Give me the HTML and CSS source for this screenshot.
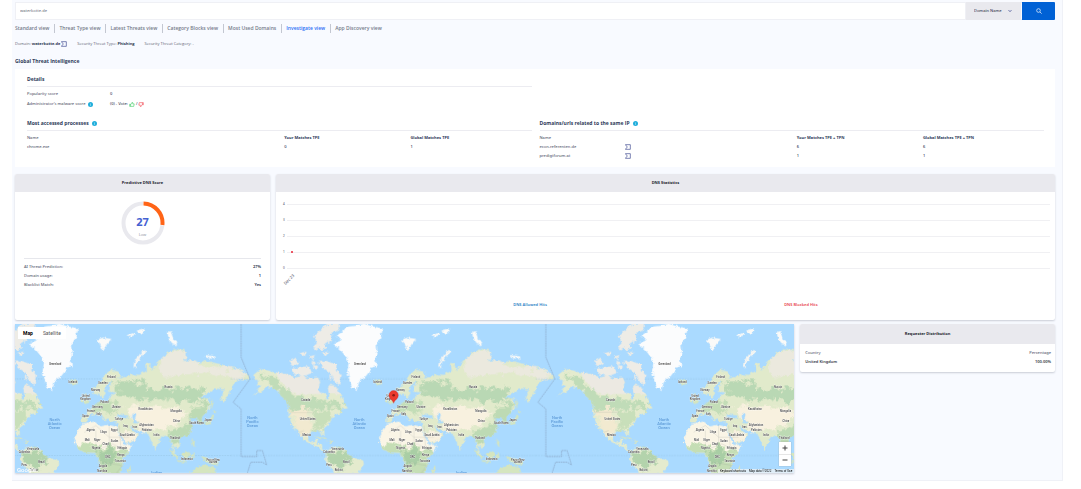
FILE: index.html
```html
<!DOCTYPE html>
<html lang="en">
<head>
<meta charset="utf-8">
<title>Investigate view</title>
<link rel="stylesheet" href="styles.css">
</head>
<body>
<svg class="defs" aria-hidden="true">
  <defs>
    <symbol id="sigma" viewBox="0 0 18 18"><path d="M9 2H1l6 7-6 7h15V2H9" fill="none" stroke="#3c4890" stroke-width="2"/></symbol>
    <symbol id="info" viewBox="0 0 16 16"><circle cx="8" cy="8" r="8" fill="#21aedb"/><path d="M8 7v5M8 4v1.500" stroke="#c9f0fb" stroke-width="2"/></symbol>
    <symbol id="thumb" viewBox="0 0 18 16"><path d="M1.500 7h3v7h-3zM4.500 7.500 8 5l1-4c3 0 3 3 2 5h5l-1.500 8H4.500" fill="none" stroke="currentColor" stroke-width="1.800" stroke-linejoin="round"/></symbol>
  </defs>
</svg>
<main class="page">
  <form class="search">
    <input class="search-box" type="text" value="waterkotte.de" aria-label="Search">
    <div class="select-wrap">
      <select class="search-type" aria-label="Search type"><option>Domain Name</option></select>
      <svg class="chevron" viewBox="0 0 10 8"><path d="M1.500 2 5 5.500 8.500 2" fill="none" stroke="#34408c" stroke-width="2"/></svg>
    </div>
    <button class="search-button" type="button" aria-label="Search"><svg class="search-icon" viewBox="0 0 18 18"><circle cx="7.500" cy="7.500" r="5.500" fill="none" stroke="#fff" stroke-width="2"/><path d="m12 12 5 5" stroke="#fff" stroke-width="2"/></svg></button>
  </form>
  <nav class="tabs">
    <a href="#">Standard view</a><a href="#">Threat Type view</a><a href="#">Latest Threats view</a><a href="#">Category Blocks view</a><a href="#">Most Used Domains</a><a class="active" href="#">Investigate view</a><a href="#">App Discovery view</a>
  </nav>
  <div class="facts">
    <span class="fact">Domain: <b>waterkotte.de</b><svg class="sigma"><use href="#sigma"/></svg></span>
    <span class="fact">Security Threat Type: <b>Phishing</b></span>
    <span class="fact">Security Threat Category: -</span>
  </div>
  <h1 class="title">Global Threat Intelligence</h1>

  <section class="panel">
    <div class="block details">
      <h2 class="block-title">Details</h2>
      <dl class="detail-list">
        <dt>Popularity score</dt><dd>0</dd>
        <dt>Administrator's malware score <svg class="info"><use href="#info"/></svg></dt>
        <dd>(0) - Vote: <button class="vote up" type="button" aria-label="Vote up"><svg><use href="#thumb"/></svg></button>/<button class="vote down" type="button" aria-label="Vote down"><svg><use href="#thumb"/></svg></button></dd>
      </dl>
    </div>
    <div class="block">
      <h2 class="block-title">Most accessed processes <svg class="info"><use href="#info"/></svg></h2>
      <table class="matches">
        <thead><tr><th>Name</th><th></th><th>Your Matches TPE</th><th>Global Matches TPE</th></tr></thead>
        <tbody><tr><td>chrome.exe</td><td></td><td>0</td><td>1</td></tr></tbody>
      </table>
    </div>
    <div class="block">
      <h2 class="block-title">Domains/urls related to the same IP <svg class="info"><use href="#info"/></svg></h2>
      <table class="matches">
        <thead><tr><th>Name</th><th></th><th>Your Matches TPE + TPN</th><th>Global Matches TPE + TPN</th></tr></thead>
        <tbody>
          <tr><td>econ-referenten.de</td><td><svg class="sigma"><use href="#sigma"/></svg></td><td>6</td><td>6</td></tr>
          <tr><td>predigtforum.at</td><td><svg class="sigma"><use href="#sigma"/></svg></td><td>1</td><td>1</td></tr>
        </tbody>
      </table>
    </div>
  </section>

  <div class="row row-score">
    <section class="card">
      <h2 class="card-title">Predictive DNS Score</h2>
      <div class="gauge">
        <svg class="ring" viewBox="0 0 44 44"><circle cx="22" cy="22" r="19.500" fill="none" stroke="#e9e9ee" stroke-width="4"/><path d="M22 2.500A19.500 19.500 0 0 1 41.400 24.400" fill="none" stroke="#fff" stroke-width="5"/><path d="M22.500 2.500A19.500 19.500 0 0 1 41.400 24" fill="none" stroke="#ff6417" stroke-width="4"/></svg>
        <div class="gauge-text"><span class="gauge-value">27</span><span class="gauge-level">Low</span></div>
      </div>
      <dl class="score-list">
        <div><dt>AI Threat Prediction:</dt><dd>27%</dd></div>
        <div><dt>Domain usage:</dt><dd>1</dd></div>
        <div><dt>Blacklist Match:</dt><dd>Yes</dd></div>
      </dl>
    </section>
    <section class="card">
      <h2 class="card-title">DNS Statistics</h2>
      <div class="chart">
        <div class="tick">4</div>
        <div class="tick">3</div>
        <div class="tick">2</div>
        <div class="tick">1<span class="dot"></span></div>
        <div class="tick">0</div>
        <div class="date">Dec 23</div>
      </div>
      <div class="legend"><span class="allowed">DNS Allowed Hits</span><span class="blocked">DNS Blocked Hits</span></div>
    </section>
  </div>

  <div class="row row-map">
    <section class="map" aria-label="Map of requesters">
      <svg class="map-canvas" viewBox="0 0 2340 447" preserveAspectRatio="xMidYMid slice">
        <defs>
          <filter id="coast" x="-5%" y="-5%" width="110%" height="110%"><feTurbulence type="fractalNoise" baseFrequency="0.09" numOctaves="3" seed="4" result="n"/><feDisplacementMap in="SourceGraphic" in2="n" scale="13" xChannelSelector="R" yChannelSelector="G"/></filter>
          <filter id="soft" x="-20%" y="-20%" width="140%" height="140%"><feTurbulence type="fractalNoise" baseFrequency="0.05" numOctaves="4" seed="9" result="n"/><feDisplacementMap in="SourceGraphic" in2="n" scale="45" xChannelSelector="R" yChannelSelector="G"/><feGaussianBlur stdDeviation="2"/></filter>
          <path id="america" d="M68 178 90 160 110 164 130 170 150 172 175 178 195 186 215 180 235 190 262 186 268 200 262 220 272 232 286 238 290 252 296 240 292 215 300 205 318 215 326 232 334 245 346 270 352 278 330 282 340 290 318 296 305 306 296 325 280 338 282 358 276 358 270 346 250 348 234 354 232 370 240 380 250 380 254 372 262 370 258 384 274 388 274 398 284 404 292 404 280 408 262 394 238 384 216 372 205 350 192 332 196 348 204 362 190 340 178 312 173 290 175 272 168 256 150 240 140 226 122 216 105 214 96 226 78 236 62 244 84 228 80 220 92 212 78 206 84 196 72 190zM290 406 304 394 324 396 342 402 352 416 366 424 398 436 400 446 388 462 384 476 316 476 304 460 290 446 283 430z"/>
          <path id="eurasia" d="M274 224 296 202 312 176 330 162 352 168 362 180 350 190 376 184 396 176 416 178 438 166 436 142 446 142 452 166 462 150 486 124 520 98 554 104 558 122 546 136 580 134 600 142 612 134 650 144 690 152 722 164 748 184 744 196 722 190 704 200 698 206 686 230 668 262 660 252 672 222 640 218 622 234 596 244 624 250 628 278 610 296 602 306 604 324 594 326 588 308 566 308 576 332 568 354 544 366 534 370 538 392 528 400 518 388 520 404 530 424 518 412 510 378 496 356 484 364 470 384 462 404 452 380 444 356 416 348 392 336 386 330 394 346 414 356 404 372 378 386 370 376 352 344 348 320 328 318 322 308 310 314 302 300 288 286 298 304 286 296 274 296 262 302 256 320 242 320 242 300 260 298 256 284 274 276 286 264 300 258 324 258 330 240 344 230 322 228 324 214 334 198 322 202 312 220 314 234 304 248 294 234 280 236z"/>
          <path id="africa" d="M246 324 280 318 300 332 322 328 348 334 356 358 370 388 394 388 388 404 366 430 364 450 356 476 300 476 296 440 284 412 250 410 232 400 220 382 226 354z"/>
          <clipPath id="america-clip"><use href="#america"/></clipPath>
          <clipPath id="eurasia-clip"><use href="#eurasia"/></clipPath>
          <clipPath id="africa-clip"><use href="#africa"/></clipPath>
          <g id="world">
            <path d="M0 420H915M0 190H915" stroke="#8db8d4" stroke-width="1" stroke-dasharray="5 3"/>
            <path d="M31 25V125L58 190 7 260 31 280V423H78V405H95L108 448 95 440H60L50 472" fill="none" stroke="#869ebd" stroke-width="2" stroke-dasharray="5 2"/>
            <g filter="url(#coast)">
              <use href="#america" fill="#e4ebce"/>
              <g clip-path="url(#america-clip)">
                <path d="M130 160H350V236H190L150 200z" fill="#ece9e2"/>
                <g filter="url(#soft)"><path d="M90 185 140 190 180 235 240 250 340 265 340 280 260 280 180 290 150 240z" fill="#c0dcb8"/><path d="M175 290 230 280 245 350 220 370z" fill="#f2ead0"/><path d="M250 285 310 285 280 340 252 345z" fill="#c8dfba"/><path d="M285 415 350 400 370 440 330 460 290 440z" fill="#b3d3ac"/></g>
              </g>
              <path d="M175 138 192 126 206 140 190 152zM180 160 200 156 232 152 244 172 220 182 190 176zM205 112 228 108 222 122zM238 122 252 118 248 134zM245 95 260 82 272 90 256 102zM238 134 258 140 250 148zM250 60 286 28 330 25 322 44 300 54 304 72 282 88 288 98 272 104 262 92zM268 112 296 108 290 120zM262 140 284 134 318 148 316 162 330 178 326 208 314 200 300 172 282 160zM244 148 262 150 258 164zM296 178 306 186 298 194z" fill="#eeece6"/>
              <path d="M308 84 332 74 318 60 338 46 346 34 376 30 400 24 426 32 458 38 450 54 454 60 438 84 440 108 434 130 438 150 424 158 404 184 386 198 378 224 366 218 356 194 350 166 354 140 346 124 332 106 322 96z" fill="#fbfcfd"/>
              <path d="M250 362 282 366 292 374 270 370zM296 376 312 380 298 384z" fill="#d7e5c3"/>
              <g transform="translate(225)">
                <use href="#eurasia" fill="#e1eacb"/>
                <g clip-path="url(#eurasia-clip)">
                  <g filter="url(#soft)"><path d="M340 196 430 200 440 225 600 215 620 245 600 260 430 250 350 240z" fill="#b9d8b4"/><path d="M270 262 340 250 340 290 280 292z" fill="#c3ddb7"/><path d="M500 350 560 330 580 270 620 260 610 320 560 370 510 400z" fill="#bddab4"/><path d="M370 270 520 275 560 290 530 325 470 345 340 350 390 390 420 340z" fill="#f8f1df"/><path d="M500 110 560 110 600 150 720 160 740 190 560 170 500 190 470 160z" fill="#ebe9de"/></g>
                </g>
                <use href="#africa" fill="#faf5e6"/>
                <g clip-path="url(#africa-clip)"><g filter="url(#soft)"><path d="M215 388 300 392 380 400 380 490 280 490 270 430z" fill="#c5deb5"/><path d="M294 405 350 402 345 440 300 445z" fill="#a9cea5"/></g></g>
                <path d="M345 306 352 296 382 300 378 308zM396 290 406 296 402 310 412 324 400 322 394 304z" fill="#aadaff"/>
                <path d="M206 196 228 194 232 204 214 210zM250 236 260 238 258 250 268 260 250 266 252 250zM240 250 248 250 246 260 238 260zM632 252 638 262 634 280 630 272zM636 286 648 284 640 292zM634 296 640 304 632 322 612 326 610 320 626 314zM504 402 516 408 532 426 530 432 516 420zM544 414 560 404 566 416 560 432 546 428zM532 434 558 438 556 442 532 438zM570 416 582 414 576 432 572 430zM574 370 582 380 580 396 574 384zM600 422 620 426 646 436 656 448 634 444 616 440zM564 476 582 460 604 448 626 450 630 460 636 448 646 476zM376 470 388 452 390 462 384 476z" fill="#d5e5bf"/>
                <path d="M290 72 306 66 332 70 322 80 306 104 296 84zM380 60 396 52 402 58 384 64zM408 44 430 38 428 52 412 54zM498 50 510 46 518 72 530 80 526 92 508 80zM612 118 640 122 642 130 616 126z" fill="#fafaf8"/>
                <path d="M402 156Q400 132 434 106" fill="none" stroke="#f5f5f2" stroke-width="8"/>
              </g>
            </g>
            <g fill="none" stroke="#8d9190" stroke-width="1" opacity=".5"><path d="M475 350 510 330 550 365 610 365M510 390V345M550 325V390M580 330 585 400M520 400 560 385 600 405M530 440 590 450 570 475M176 290H250M206 350 220 345"/></g>
          </g>
        </defs>
        <rect width="2340" height="447" fill="#aadaff"/>
        <use href="#world" x="-267" y="-25"/>
        <use href="#world" x="648" y="-25"/>
        <use href="#world" x="1563" y="-25"/>
        <g id="labels"></g>
        <path d="M1137 238c-2-10-14-12-14-24a14 14 0 0 1 28 0c0 12-12 14-14 24z" fill="#ea3a2f" stroke="#c3261d" stroke-width="1"/>
        <circle cx="1137" cy="214" r="4" fill="#8d1a13"/>
      </svg>
      <div class="map-type"><button class="on" type="button">Map</button><button type="button">Satellite</button></div>
      <div class="google">Google</div>
      <div class="zoom"><button type="button" aria-label="Zoom in"><svg viewBox="0 0 12 12"><path d="M6 1v10M1 6h10" stroke="#444" stroke-width="2"/></svg></button><button type="button" aria-label="Zoom out"><svg viewBox="0 0 12 12"><path d="M1 6h10" stroke="#444" stroke-width="2"/></svg></button></div>
      <div class="credits"><button type="button">Keyboard shortcuts</button><span>Map data ©2022</span><a href="#">Terms of Use</a></div>
    </section>
    <section class="card requester">
      <h2 class="card-title">Requester Distribution</h2>
      <table class="countries">
        <thead><tr><th>Country</th><th>Percentage</th></tr></thead>
        <tbody><tr><td>United Kingdom</td><td>100.00%</td></tr></tbody>
      </table>
    </section>
  </div>
</main>
<script src="map.js"></script>
</body>
</html>
```
FILE: styles.css
```css
* { box-sizing: border-box; }
body { margin: 0; background: #fff; font: 500 4px/8px "Noto Sans", "Open Sans", sans-serif; color: #5d6373; }
h1, h2, dl, dd { margin: 0; }
button, input, select { font: inherit; color: inherit; border: 0; border-radius: 0; padding: 0; margin: 0; background: none; }
svg { display: block; }
.defs { position: absolute; width: 0; height: 0; }
.page { margin: 0 18px 0 12px; padding: 2px 7px 7px 3px; background: #f8faff; border: 1px solid #eff1f7; border-top: 0; border-left: 0; }

.search { display: flex; height: 18px; }
.search-box { flex: 1; min-width: 0; background: #fff; border: 1px solid #eff0f5; padding: 0 4px; color: #777c88; }
.select-wrap { position: relative; width: 55px; background: #e9e9ee; }
.search-type { width: 100%; height: 100%; appearance: none; padding: 0 8px; color: #3b4256; }
.chevron { position: absolute; right: 9px; top: 7px; width: 4px; height: 4px; pointer-events: none; }
.search-button { width: 34px; background: #0061d5; border-left: 1px solid #f8faff; border-radius: 1px; display: grid; place-items: center; }
.search-icon { width: 6px; height: 6px; }

.tabs { display: flex; margin-top: 4px; font-family: "Open Sans", sans-serif; font-size: 5px; line-height: 9px; font-weight: 600; }
.tabs a { color: #757b8a; text-decoration: none; padding-right: 5px; margin-right: 4px; border-right: 1px solid #c3c7d1; }
.tabs a:last-child { border: 0; }
.tabs .active { color: #2a70f5; }

.facts { display: flex; gap: 10px; margin-top: 7px; font-family: "Open Sans", sans-serif; }
.fact { display: flex; align-items: center; gap: 1px; white-space: nowrap; }
.fact b { color: #2f3852; }
.sigma { width: 6px; height: 6px; }
.title { margin-top: 9px; font: 700 5px/9px "Open Sans", sans-serif; color: #2e3a59; }

.panel { display: grid; grid-template-columns: 1fr 1fr; column-gap: 8px; margin-top: 3px; padding: 6px 11px 7px 12px; background: #fff; }
.details { padding-bottom: 10px; grid-row: 1; }
.details + .block { grid-column: 1; }
.block-title { display: flex; align-items: center; gap: 3px; height: 12px; padding-bottom: 3px; border-bottom: 1px solid #ececf1; font-family: "Open Sans", sans-serif; font-size: 5px; color: #2e3a59; }
.info { width: 5px; height: 5px; }
.detail-list { display: grid; grid-template-columns: 83px 1fr; padding-top: 2px; line-height: 10px; }
.detail-list dt, .detail-list dd { display: flex; align-items: center; gap: 3px; }
.detail-list dd { gap: 1px; color: #3d4459; }
.vote svg { width: 6px; height: 5px; }
.up { color: #31c75a; }
.down { color: #f1404b; transform: rotate(180deg); }
.matches { width: 100%; table-layout: fixed; border-collapse: collapse; margin-top: 2px; line-height: 9px; }
.matches th, .matches td { padding: 0; height: 9px; text-align: left; font-weight: 500; }
.matches th:nth-child(1) { width: 17%; }
.matches th:nth-child(2) { width: 34%; }
.matches th:nth-child(3) { width: 25%; }
.matches th:nth-child(4) { width: 24%; }
.matches th:nth-child(n+3) { font-weight: 700; color: #2e3a59; }
.matches td:nth-child(n+3) { color: #2e3a59; }

.row { display: grid; gap: 6px; align-items: start; }
.row-score { grid-template-columns: 255fr 779fr; margin-top: 7px; align-items: stretch; }
.row-map { grid-template-columns: 780fr 255fr; margin-top: 4px; }
.card { background: #fff; border-radius: 2px; box-shadow: 0 1px 2px #c9ccd6; overflow: hidden; }
.card-title { height: 18px; line-height: 18px; font-size: 4px; text-align: center; background: #e9e9ee; color: #23262f; }
.requester .card-title { height: 20px; line-height: 20px; }
.gauge { position: relative; width: 44px; margin: 9px auto 13px; }
.ring { width: 44px; height: 44px; }
.gauge-text { position: absolute; inset: 0; padding-top: 15px; display: flex; flex-direction: column; align-items: center; }
.gauge-value { font-size: 11px; line-height: 12px; font-weight: 700; color: #4562d2; }
.gauge-level { margin-top: 3px; color: #a5a8b2; }
.score-list { margin: 0 9px; padding: 3px 0 31px; border-top: 1px solid #e6e7ec; line-height: 9px; }
.score-list div { display: flex; justify-content: space-between; }
.score-list dd { color: #20283f; font-weight: 600; }

.chart { padding: 4px 5px 0 7px; font-size: 3px; }
.tick { position: relative; display: flex; align-items: center; gap: 2px; height: 16px; }
.tick::after { content: ""; flex: 1; border-top: 1px solid #f0f0f3; }
.dot { position: absolute; left: 8px; top: 7px; width: 2px; height: 2px; border-radius: 1px; background: #e82234; }
.date { width: 12px; font-size: 4px; white-space: nowrap; transform: rotate(-45deg); }
.legend { display: flex; justify-content: space-evenly; margin-top: 17px; font-weight: 600; }
.allowed { color: #2a7fc6; }
.blocked { color: #e8434c; }

.map { position: relative; overflow: hidden; box-shadow: 0 1px 2px #c9ccd6; }
.map-canvas { width: 100%; }
.map-canvas text { font: 500 8px Roboto, sans-serif; fill: #444; text-anchor: middle; stroke: #fff; stroke-width: 1px; paint-order: stroke; }
.map-canvas .sea { font-size: 12px; fill: #5e9bd8; stroke: none; }
.map-type { position: absolute; left: 3px; top: 3px; display: flex; background: #fff; font: 5px/12px Roboto, sans-serif; color: #555; }
.map-type button { height: 12px; padding: 0 5px; }
.map-type .on { font-weight: 700; color: #000; }
.google { position: absolute; left: 2px; bottom: 0; font: 500 6px/7px Roboto, sans-serif; color: #fff; }
.zoom { position: absolute; right: 3px; bottom: 7px; width: 12px; background: #fff; display: grid; box-shadow: 0 0 1px #999; }
.zoom button { height: 12px; display: grid; place-items: center; }
.zoom button + button { border-top: 1px solid #e6e6e6; }
.zoom svg { width: 6px; height: 6px; }
.credits { position: absolute; right: 0; bottom: 0; display: flex; gap: 3px; padding: 0 2px; background: #f5f5f5b0; font: 3px/4px Roboto, sans-serif; color: #000; }
.credits a { color: inherit; text-decoration: none; }

.countries { width: 100%; border-collapse: collapse; margin: 4px 0 6px; }
.countries th, .countries td { padding: 0 4px 0 5px; height: 9px; text-align: left; font-weight: 500; }
.countries td { font-weight: 600; color: #30343e; }
.countries th:last-child, .countries td:last-child { text-align: right; }
```
FILE: map.js
```js
const places = [
  ["Greenland", 388, 148], ["Iceland", 441, 203], ["Canada", 225, 256], ["United States", 231, 312],
  ["Mexico", 228, 360], ["Venezuela", 321, 402], ["Colombia", 295, 412], ["Brazil", 347, 443],
  ["Peru", 295, 450], ["Bolivia", 324, 465], ["Finland", 556, 187], ["Sweden", 531, 206],
  ["Norway", 509, 226], ["United", 479, 245], ["Kingdom", 479, 253], ["Poland", 536, 263],
  ["Germany", 515, 276], ["Ukraine", 571, 276], ["France", 495, 290], ["Italy", 519, 299],
  ["Spain", 479, 305], ["Türkiye", 579, 313], ["Russia", 728, 218], ["Kazakhstan", 659, 282],
  ["Mongolia", 751, 288], ["China", 752, 320], ["Japan", 847, 315], ["South Korea", 812, 324],
  ["Iraq", 599, 333], ["Iran", 627, 337], ["Afghanistan", 662, 330], ["Pakistan", 663, 346],
  ["India", 692, 362], ["Saudi Arabia", 604, 360], ["Thailand", 747, 371], ["Algeria", 494, 347],
  ["Libya", 533, 351], ["Egypt", 565, 347], ["Mali", 484, 376], ["Niger", 514, 377],
  ["Chad", 539, 387], ["Sudan", 566, 379], ["Nigeria", 510, 399], ["Ethiopia", 589, 400],
  ["Kenya", 585, 422], ["DRC", 546, 426], ["Tanzania", 583, 439], ["Angola", 531, 454],
  ["Namibia", 529, 470], ["Indonesia", 783, 433], ["Papua New", 862, 435], ["Guinea", 862, 443],
  ["North", 65, 311, 1], ["Pacific", 65, 323, 1], ["Ocean", 65, 335, 1],
  ["North", 386, 317, 1], ["Atlantic", 386, 329, 1], ["Ocean", 386, 341, 1], ["Indian", 693, 475, 1]
];
const layer = document.getElementById("labels");
for (const shift of [-267, 648, 1563]) {
  for (const [name, x, y, sea] of places) {
    const px = x + shift;
    if (px < 10 || px > 2250 && y > 470 || px > 2330) continue;
    const label = document.createElementNS("http://www.w3.org/2000/svg", "text");
    label.setAttribute("x", px);
    label.setAttribute("y", y - 25);
    if (sea) label.setAttribute("class", "sea");
    label.textContent = name;
    layer.append(label);
  }
}
```
